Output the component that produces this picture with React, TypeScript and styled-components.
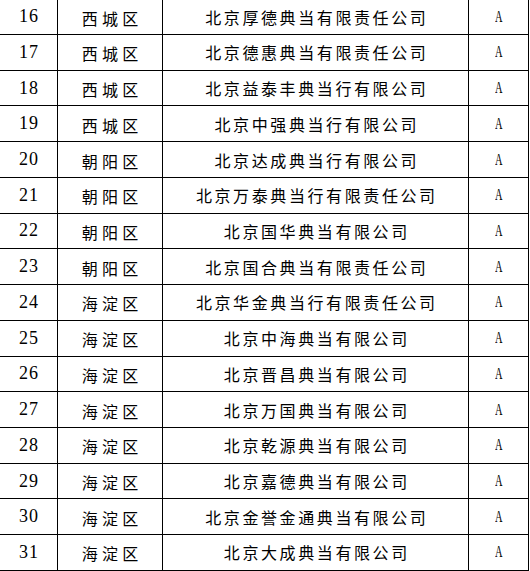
import * as React from "react"
import styled, { createGlobalStyle } from 'styled-components';

const GlobalStyle = createGlobalStyle`
    html, body {
        margin: 0;
        padding: 0;
        background: #ffffff;
        overflow: hidden;
    }
`;

const Table = styled.div`
    display: grid;
    grid-template-columns: 58px 105px 306px 60px;
    grid-auto-rows: 35.73px;
    margin-top: -0.7px;
    color: #000000;
`;

const Cell = styled.div<{ $pad?: number }>`
    display: flex;
    align-items: center;
    justify-content: center;
    border-right: 1px solid #000000;
    border-bottom: 1px solid #000000;
    padding-top: ${({ $pad }) => $pad || 0}px;
    box-sizing: border-box;
    white-space: nowrap;
`;

const Num = styled.span`
    font-family: "Liberation Serif", "Times New Roman", serif;
    font-size: 18px;
    letter-spacing: 1px;
    margin-right: -1px;
`;

const District = styled.span`
    font-family: "Noto Sans CJK SC", sans-serif;
    font-size: 16px;
    letter-spacing: 4.2px;
    margin-right: -4.2px;
`;

const Company = styled.span`
    font-family: "Noto Sans CJK SC", sans-serif;
    font-size: 16px;
    letter-spacing: 2.6px;
    margin-right: -2.6px;
`;

const Grade = styled.span`
    display: inline-block;
    font-family: "Liberation Serif", "Times New Roman", serif;
    font-size: 16px;
    transform: scaleX(0.65);
`;

const rows: [number, string, string][] = [
    [16, "西城区", "北京厚德典当有限责任公司"],
    [17, "西城区", "北京德惠典当有限责任公司"],
    [18, "西城区", "北京益泰丰典当行有限公司"],
    [19, "西城区", "北京中强典当行有限公司"],
    [20, "朝阳区", "北京达成典当行有限公司"],
    [21, "朝阳区", "北京万泰典当行有限责任公司"],
    [22, "朝阳区", "北京国华典当有限公司"],
    [23, "朝阳区", "北京国合典当有限责任公司"],
    [24, "海淀区", "北京华金典当行有限责任公司"],
    [25, "海淀区", "北京中海典当有限公司"],
    [26, "海淀区", "北京晋昌典当有限公司"],
    [27, "海淀区", "北京万国典当有限公司"],
    [28, "海淀区", "北京乾源典当有限公司"],
    [29, "海淀区", "北京嘉德典当有限公司"],
    [30, "海淀区", "北京金誉金通典当有限公司"],
    [31, "海淀区", "北京大成典当有限公司"],
];

const App: React.FC = () => {
    return <>
        <GlobalStyle />
        <Table>
            {rows.map(([n, district, company]) => (
                <React.Fragment key={n}>
                    <Cell><Num>{n}</Num></Cell>
                    <Cell $pad={2}><District>{district}</District></Cell>
                    <Cell><Company>{company}</Company></Cell>
                    <Cell><Grade>A</Grade></Cell>
                </React.Fragment>
            ))}
        </Table>
    </>
}

export default App;
